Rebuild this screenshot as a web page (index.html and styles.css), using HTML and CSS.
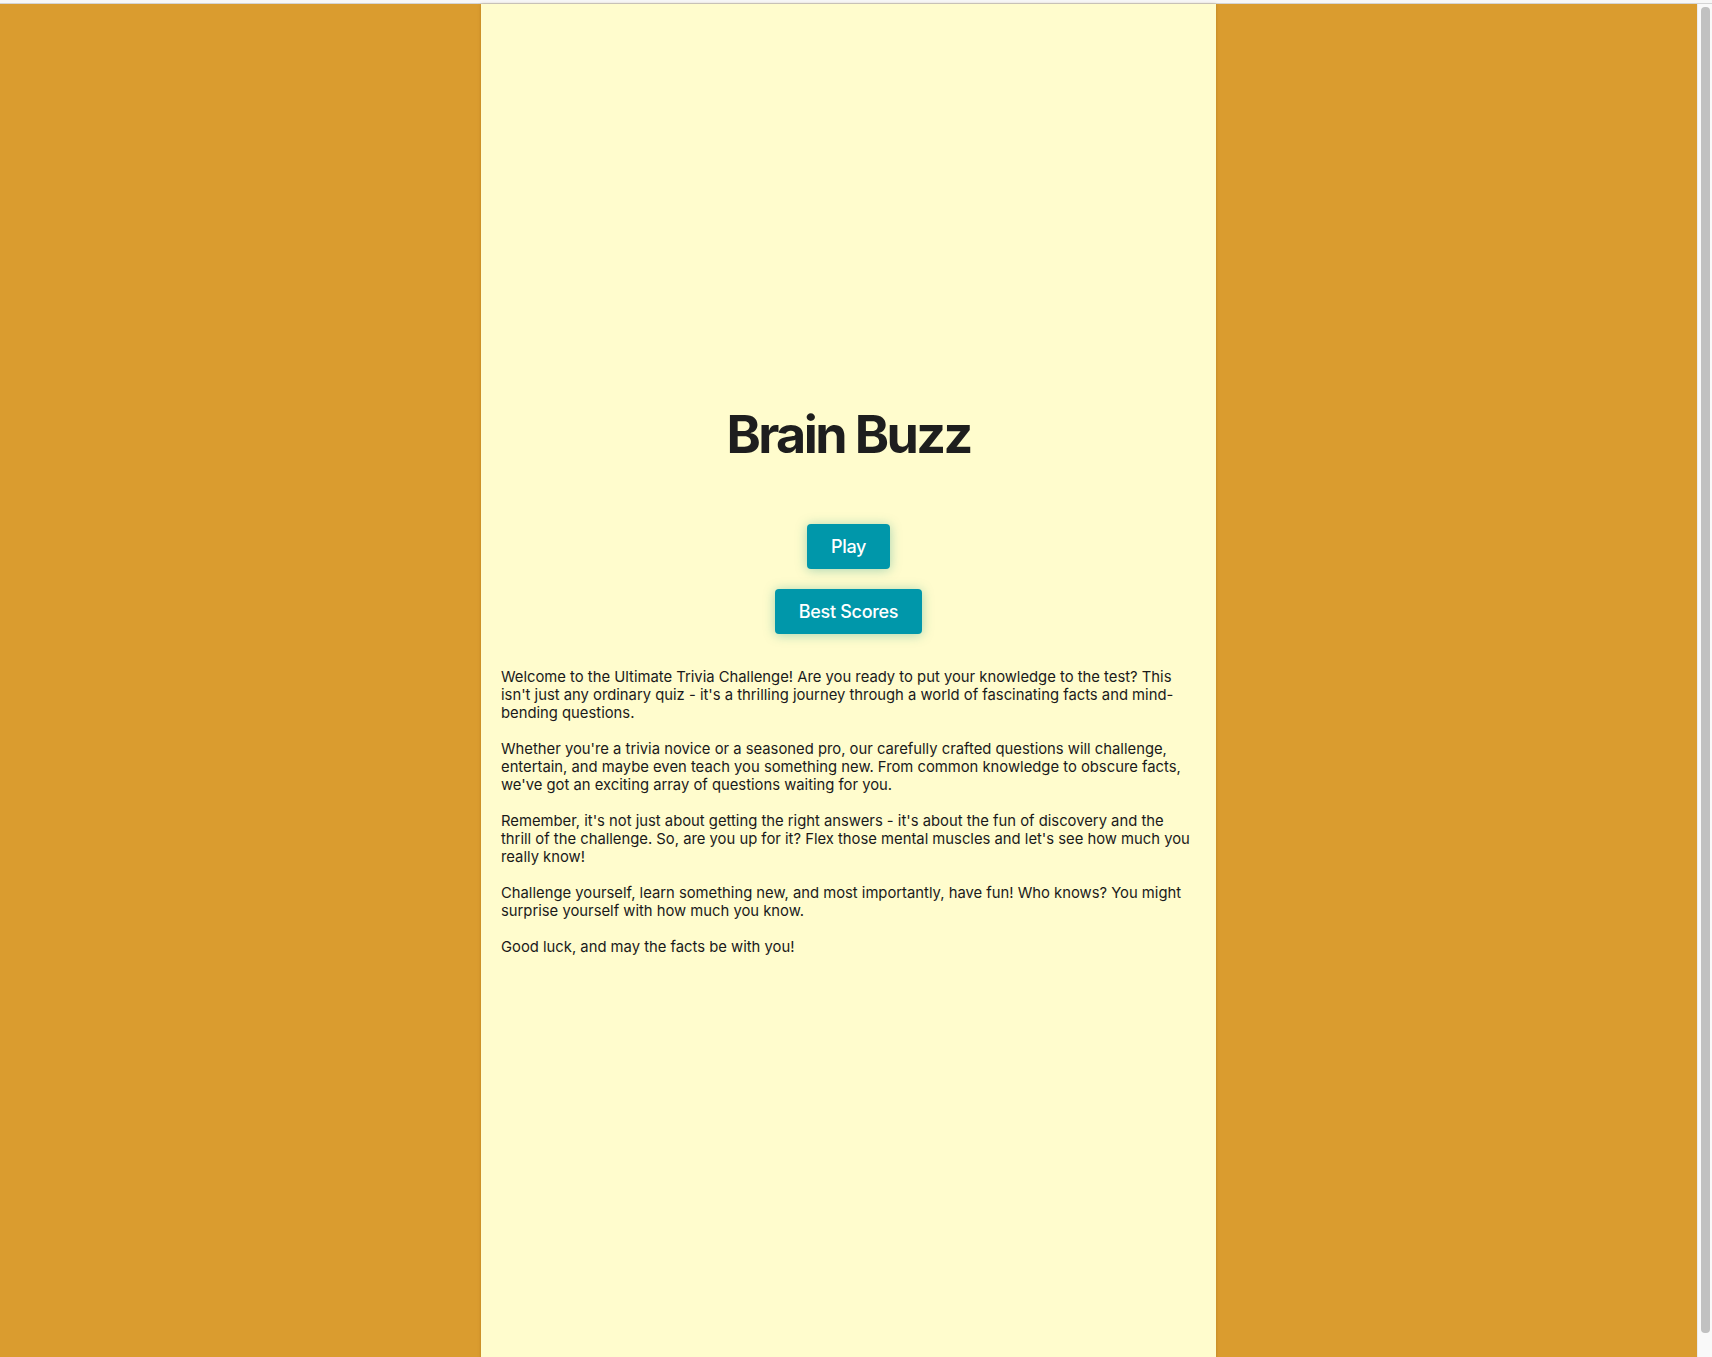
FILE: index.html
```html
<!DOCTYPE html>
<html lang="en">
<head>
<meta charset="utf-8">
<title>Brain Buzz</title>
<link rel="stylesheet" href="styles.css">
</head>
<body>
<div class="topline"></div>
<div class="page">
  <main class="column">
    <h1 class="title">Brain Buzz</h1>
    <div class="actions">
      <button class="btn">Play</button>
      <button class="btn">Best Scores</button>
    </div>
    <p class="intro">Welcome to the Ultimate Trivia Challenge! Are you ready to put your knowledge to the test? This isn't just any ordinary quiz - it's a thrilling journey through a world of fascinating facts and mind-bending questions.<br><br>Whether you're a trivia novice or a seasoned pro, our carefully crafted questions will challenge, entertain, and maybe even teach you something new. From common knowledge to obscure facts, we've got an exciting array of questions waiting for you.<br><br>Remember, it's not just about getting the right answers - it's about the fun of discovery and the thrill of the challenge. So, are you up for it? Flex those mental muscles and let's see how much you really know!<br><br>Challenge yourself, learn something new, and most importantly, have fun! Who knows? You might surprise yourself with how much you know.<br><br>Good luck, and may the facts be with you!</p>
  </main>
</div>
<div class="scrollbar"><div class="scrollbar-thumb"></div></div>
</body>
</html>
```
FILE: styles.css
```css
html, body {
  margin: 0;
  padding: 0;
}

body {
  background: #f9f9f9;
  font-family: Inter, "Noto Sans", sans-serif;
  color: #1c1c1c;
}

.topline {
  height: 3px;
  background: #f7f7f7;
  border-bottom: 1px solid #d4d4d4;
}

.page {
  margin-right: 15px;
  background: #da9c2f;
  display: flex;
  justify-content: center;
}

.column {
  width: 735px;
  min-height: 1383px;
  box-sizing: border-box;
  padding: 399px 20px 0;
  background: #fffccd;
  box-shadow: 0 0 3px rgba(120, 80, 0, 0.35);
  display: flex;
  flex-direction: column;
  align-items: center;
}

.title {
  margin: 0;
  font-size: 52px;
  font-weight: 700;
  line-height: 63px;
  color: #1e1e1e;
  letter-spacing: -2.6px;
}

.actions {
  margin-top: 58px;
  display: flex;
  flex-direction: column;
  align-items: center;
  gap: 20px;
}

.btn {
  font-family: Inter, "Noto Sans", sans-serif;
  font-size: 18px;
  font-weight: 500;
  line-height: 21px;
  letter-spacing: -0.3px;
  color: #ffffff;
  background: #0097aa;
  border: none;
  border-radius: 4px;
  padding: 12px 24px;
  box-shadow: 0 1px 12px rgba(0, 140, 130, 0.35);
  cursor: pointer;
}

.intro {
  align-self: stretch;
  margin: 34px 0 0;
  font-size: 14.8px;
  line-height: 18px;
  color: #1a1a1a;
}

.scrollbar {
  position: fixed;
  top: 4px;
  right: 0;
  width: 14px;
  bottom: 0;
  background: #f9f9f9;
  border-left: 1px solid #ececec;
}

.scrollbar-thumb {
  margin: 3px 2px 0 3px;
  height: 1326px;
  border-radius: 4px;
  background: #c1c1c1;
}
```
